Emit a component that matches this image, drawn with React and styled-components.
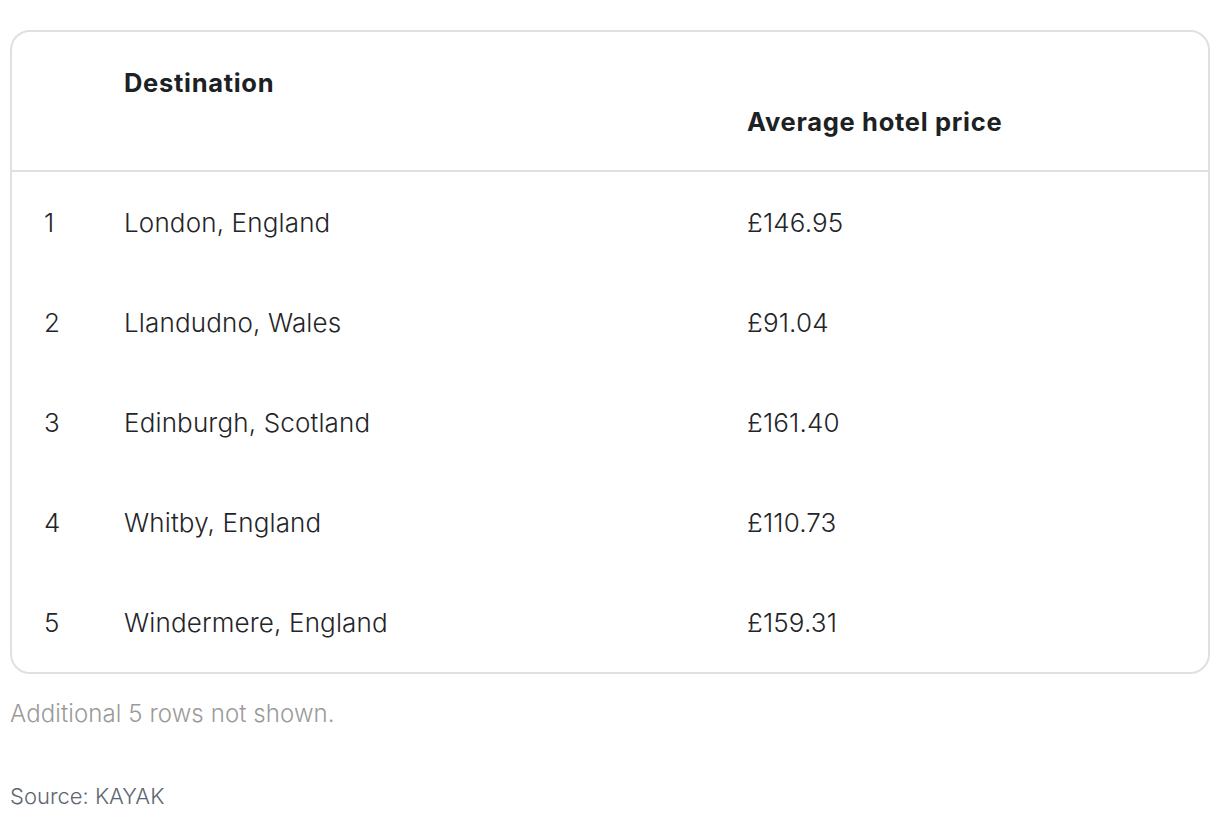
import React from "react";
import styled, { createGlobalStyle } from "styled-components";

const GlobalStyle = createGlobalStyle`
  body {
    margin: 0;
    background: #ffffff;
    font-family: Inter, "Noto Sans", sans-serif;
  }
`;

const Page = styled.div`
  padding: 30px 10px 0 10px;
`;

const Card = styled.div`
  border: 2px solid #e0e0e0;
  border-radius: 20px;
  overflow: hidden;
`;

const Row = styled.div`
  display: grid;
  grid-template-columns: 80px 623px 1fr;
  align-items: center;
  height: ${(p) => (p.head ? "140px" : "100px")};
  border-bottom: ${(p) => (p.head ? "2px solid #e0e0e0" : "none")};
  padding-left: 32px;
  box-sizing: border-box;
`;

const HeadCell = styled.div`
  align-self: ${(p) => (p.bottom ? "end" : "start")};
  padding: ${(p) => (p.bottom ? "0 0 33px 0" : "36px 0 0 0")};
  font-size: 25.5px;
  font-weight: 700;
  line-height: 30px;
  letter-spacing: 0.7px;
  color: #1c2124;
`;

const Cell = styled.div`
  font-size: 26px;
  font-weight: 300;
  letter-spacing: 0.15px;
  color: #1f2529;
`;

const Note = styled.div`
  margin-top: 25px;
  font-size: 24px;
  font-weight: 300;
  letter-spacing: 0.1px;
  color: #9a9a9a;
`;

const Source = styled.div`
  margin-top: 55px;
  font-size: 22px;
  font-weight: 300;
  color: #5c6670;
`;

const data = [
  ["London, England", "£146.95"],
  ["Llandudno, Wales", "£91.04"],
  ["Edinburgh, Scotland", "£161.40"],
  ["Whitby, England", "£110.73"],
  ["Windermere, England", "£159.31"],
];

export default function App() {
  return (
    <Page>
      <GlobalStyle />
      <Card>
        <Row head>
          <HeadCell />
          <HeadCell>Destination</HeadCell>
          <HeadCell bottom>Average hotel price</HeadCell>
        </Row>
        {data.map((d, i) => (
          <Row key={d[0]}>
            <Cell>{i + 1}</Cell>
            <Cell>{d[0]}</Cell>
            <Cell>{d[1]}</Cell>
          </Row>
        ))}
      </Card>
      <Note>Additional 5 rows not shown.</Note>
      <Source>Source: KAYAK</Source>
    </Page>
  );
}
